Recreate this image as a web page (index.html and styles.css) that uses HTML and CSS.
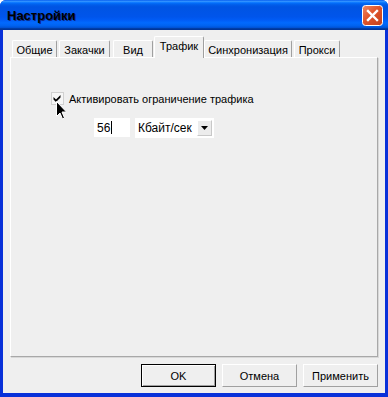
FILE: index.html
```html
<!DOCTYPE html>
<html lang="ru">
<head>
<meta charset="utf-8">
<title>Настройки</title>
<link rel="stylesheet" href="styles.css">
</head>
<body>
<div class="window">
  <div class="titlebar">
    <span class="title">Настройки</span>
    <span class="close-btn">
      <svg width="21" height="21" viewBox="0 0 21 21">
        <defs>
          <linearGradient id="cg" x1="0" y1="0" x2="1" y2="1">
            <stop offset="0" stop-color="#f08a66"/>
            <stop offset="0.45" stop-color="#e0542a"/>
            <stop offset="1" stop-color="#c2401c"/>
          </linearGradient>
        </defs>
        <rect x="0.5" y="0.5" width="20" height="20" rx="3" fill="url(#cg)" stroke="#fff"/>
        <path d="M6 6 L15 15 M15 6 L6 15" stroke="#fff" stroke-width="2.4" stroke-linecap="square"/>
      </svg>
    </span>
  </div>
  <div class="client">
    <div class="tabstrip">
      <div class="tab t-general">Общие</div>
      <div class="tab t-downloads">Закачки</div>
      <div class="tab t-view">Вид</div>
      <div class="tab tab-active t-traffic">Трафик</div>
      <div class="tab t-sync">Синхронизация</div>
      <div class="tab t-proxy">Прокси</div>
    </div>
    <div class="panel">
      <label class="check-row">
        <span class="checkbox">
          <svg width="11" height="11" viewBox="0 0 11 11"><path d="M1.5 4 L4 6.5 L8.5 2 L8.5 4.5 L4 9 L1.5 6.5 Z" fill="#000"/></svg>
        </span>
        <span class="check-label">Активировать ограничение трафика</span>
      </label>
      <div class="limit-row">
        <span class="num-input">56<span class="caret"></span></span>
        <span class="select">
          <span class="select-value">Кбайт/сек</span>
          <span class="select-btn">
            <svg width="7" height="4" viewBox="0 0 7 4"><path d="M0 0 H7 L3.5 4 Z" fill="#000"/></svg>
          </span>
        </span>
      </div>
    </div>
    <div class="buttons">
      <button class="btn btn-default">OK</button>
      <button class="btn">Отмена</button>
      <button class="btn">Применить</button>
    </div>
  </div>
  <svg class="cursor" width="12" height="19" viewBox="0 0 12 19">
    <path d="M0.5 0.5 L0.5 15.5 L4 12 L6.5 18 L8.5 17 L6 11 L10.5 11 Z" fill="#000" stroke="#fff" stroke-width="1"/>
  </svg>
</div>
</body>
</html>
```
FILE: styles.css
```css
html, body {
  margin: 0;
  padding: 0;
  background: #ffffff;
}

.window {
  position: relative;
  width: 388px;
  height: 397px;
  display: flex;
  flex-direction: column;
  background: #0831d9;
  border-radius: 6px 6px 0 0;
  overflow: hidden;
  font-family: "Liberation Sans", Arial, sans-serif;
  font-size: 11px;
  color: #000;
}

.titlebar {
  height: 30px;
  flex: none;
  display: flex;
  align-items: center;
  justify-content: space-between;
  padding: 0 5px 0 7px;
  background: linear-gradient(to bottom, #0058ee 0%, #3593ff 4%, #288eff 6%, #127dff 8%, #036ffc 10%, #0262ee 14%, #0057e5 20%, #0054e3 24%, #0055eb 56%, #005bf5 66%, #026afe 76%, #0062ef 86%, #0052d6 92%, #0040ab 94%, #003092 100%);
}

.title {
  font-weight: bold;
  font-size: 13px;
  color: #000;
  text-shadow: 1px 1px 0 #0a2a8a;
  margin-top: 1px;
}

.close-btn {
  display: flex;
  width: 21px;
  height: 21px;
  margin-top: 1px;
}

.client {
  flex: 1;
  margin: 0 3px 4px 3px;
  background: #efefef;
  display: flex;
  flex-direction: column;
  padding: 6px 7px 6px 7px;
}

.tabstrip {
  display: flex;
  align-items: flex-end;
  height: 21px;
  padding-left: 2px;
}

.tab {
  height: 17px;
  box-sizing: border-box;
  margin-right: 2px;
  border-top: 1px solid #ffffff;
  border-left: 1px solid #ffffff;
  border-right: 1px solid #a0a0a0;
  border-radius: 2px 2px 0 0;
  background: #efefef;
  display: flex;
  align-items: center;
  justify-content: center;
  padding-top: 2px;
  white-space: nowrap;
}

.tab-active {
  position: relative;
  z-index: 1;
  height: 22px;
  margin: 0 0 -1px -1px;
  padding-top: 0;
  padding-bottom: 3px;
}

.t-general { width: 45px; }
.t-downloads { width: 51px; margin-right: 3px; }
.t-view { width: 40px; }
.t-traffic { width: 50px; }
.t-sync { width: 88px; }
.t-proxy { width: 46px; }

.panel {
  height: 300px;
  box-sizing: border-box;
  border-top: 1px solid #ffffff;
  border-left: 1px solid #ffffff;
  border-right: 1px solid #a8a8a8;
  border-bottom: 1px solid #a8a8a8;
  box-shadow: 1px 1px 0 #d8d8d8;
  padding: 33px 0 0 40px;
  display: flex;
  flex-direction: column;
}

.check-row {
  display: flex;
  align-items: center;
  gap: 4px;
  height: 15px;
}

.checkbox {
  width: 13px;
  height: 13px;
  box-sizing: border-box;
  border: 1px solid #d0d0d0;
  background: #f6f6f6;
  display: flex;
  align-items: center;
  justify-content: center;
}

.check-label {
  margin-left: 1px;
}

.limit-row {
  display: flex;
  align-items: flex-start;
  gap: 5px;
  margin: 12px 0 0 43px;
}

.num-input {
  width: 36px;
  height: 19px;
  box-sizing: border-box;
  background: #ffffff;
  display: flex;
  align-items: center;
  padding-left: 3px;
  font-size: 12px;
}

.caret {
  display: inline-block;
  width: 1px;
  height: 13px;
  background: #000;
  margin-left: 1px;
}

.select {
  width: 79px;
  height: 20px;
  box-sizing: border-box;
  background: #ffffff;
  display: flex;
  align-items: center;
  justify-content: space-between;
  padding: 2px 2px 2px 3px;
  font-size: 12px;
}

.select-btn {
  width: 15px;
  height: 16px;
  box-sizing: border-box;
  background: #ececec;
  border-top: 1px solid #fff;
  border-left: 1px solid #fff;
  border-right: 1px solid #c8c8c8;
  border-bottom: 1px solid #c8c8c8;
  display: flex;
  align-items: center;
  justify-content: center;
}

.buttons {
  display: flex;
  justify-content: flex-end;
  gap: 6px;
  margin-top: 7px;
  padding-right: 0;
}

.btn {
  width: 75px;
  height: 23px;
  box-sizing: border-box;
  font-family: "Liberation Sans", Arial, sans-serif;
  font-size: 11px;
  color: #000;
  background: #efefef;
  border-top: 1px solid #ffffff;
  border-left: 1px solid #ffffff;
  border-right: 1px solid #a0a0a0;
  border-bottom: 1px solid #a0a0a0;
  padding: 0;
  margin: 0;
}

.btn-default {
  border: 1px solid #000;
  box-shadow: inset 1px 1px 0 #fff, inset -1px -1px 0 #a0a0a0;
}

.cursor {
  position: absolute;
  left: 56px;
  top: 101px;
  z-index: 5;
}
```
